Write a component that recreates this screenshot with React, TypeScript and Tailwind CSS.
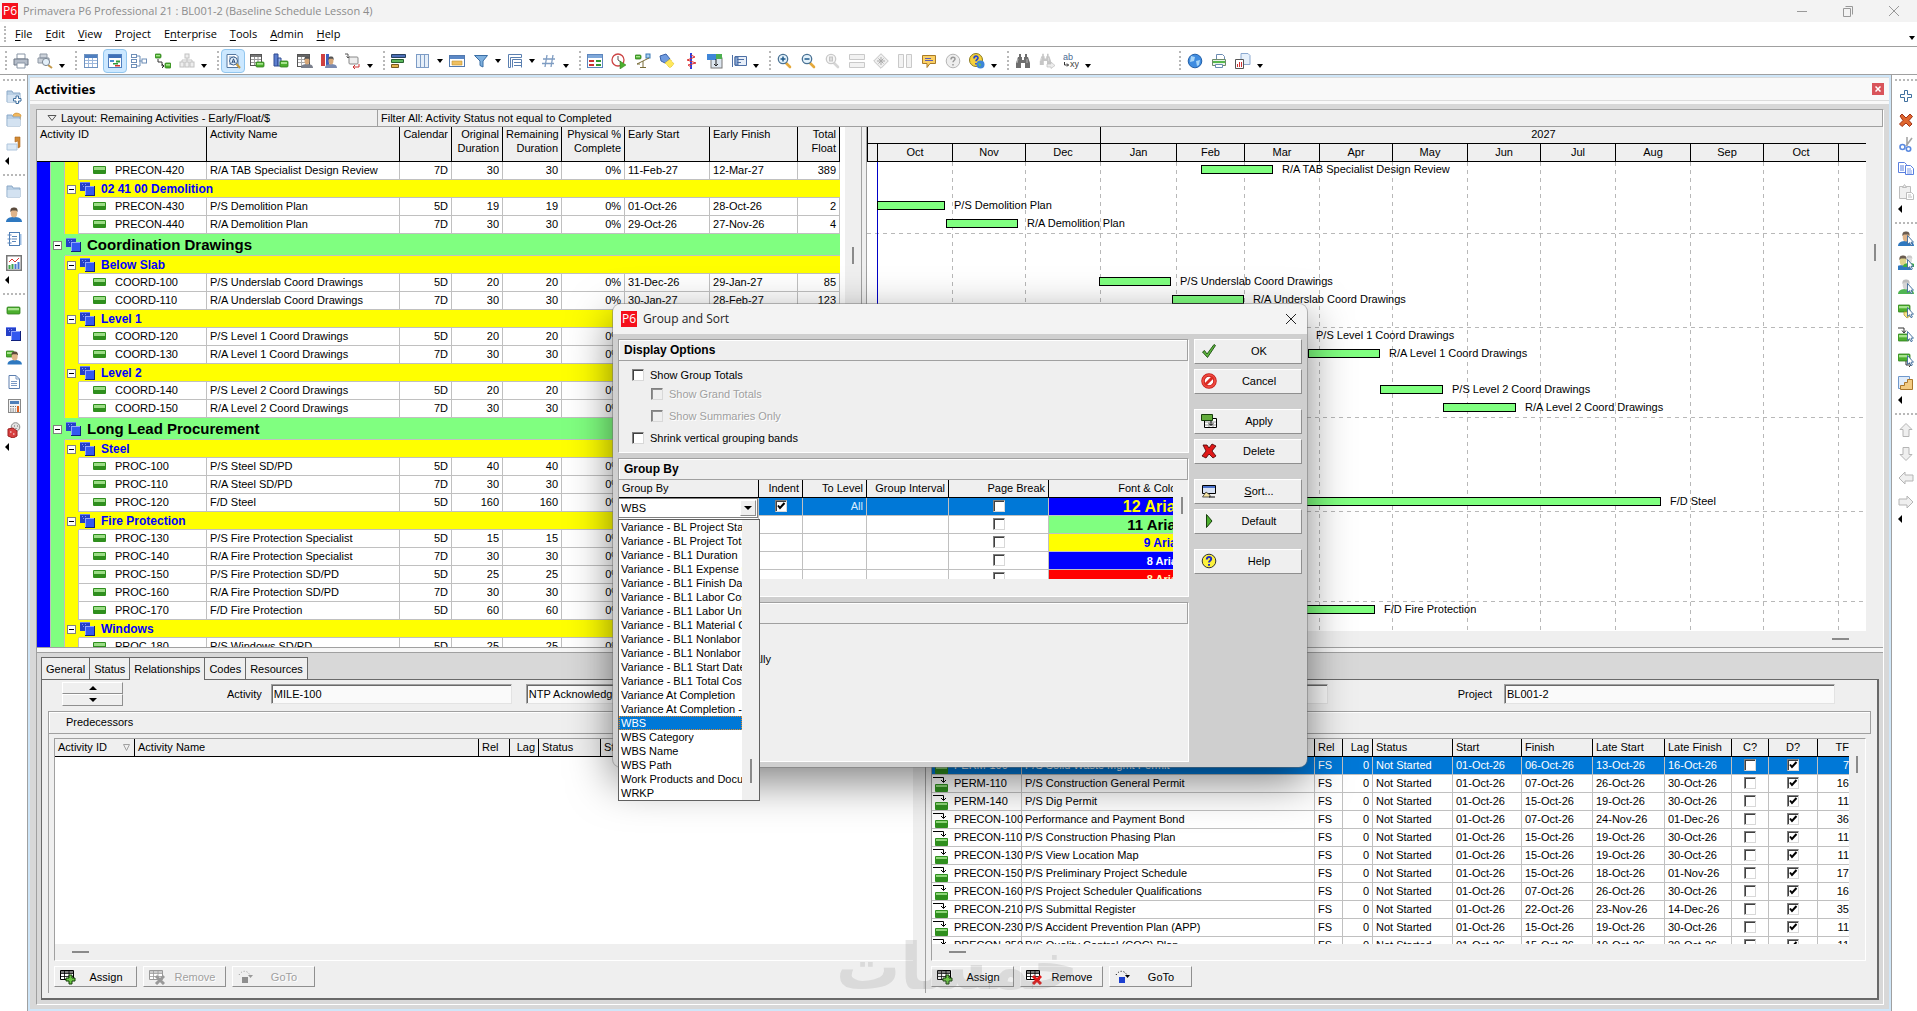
import React from "react";

const ARIAL = "font-['Liberation_Sans',Arial,sans-serif]";
const SEGOE = "font-['Open_Sans','Noto_Sans',sans-serif]";

type Kids = { children?: React.ReactNode };

/* ---------- icons ---------- */

function Svg({ children, w = 16, h = 16 }: Kids & { w?: number; h?: number }) {
  return (
    <svg width={w} height={h} viewBox={`0 0 ${w} ${h}`} aria-hidden="true" className="shrink-0">
      {children}
    </svg>
  );
}

const folder = (
  <>
    <path d="M1 3h5l1 2h7v9H1z" fill="#b9cfe4" stroke="#8ba9c8" />
    <path d="M1.5 7h12.5v7H1.5z" fill="#d3e2f1" />
  </>
);
const cursor = <path d="M9.5 4.5v9l2-1.8 1.5 3 1.4-.7-1.4-2.8h2.5z" fill="#fff" stroke="#3d6a9a" strokeWidth=".9" />;
const green = (x: number, y: number, w: number, h: number) => (
  <>
    <rect x={x} y={y} width={w} height={h} rx="1" fill="#4caf2e" stroke="#2f7d1c" strokeWidth=".8" />
    <rect x={x + 1} y={y + 1} width={w - 2} height={h / 3} fill="#a6e38d" />
  </>
);
const person = (hair: string, skin: string, body: string) => (
  <>
    <path d="M0 15c0-4 4-5 8-5s8 1 8 5z" fill={body} />
    <ellipse cx="8" cy="6" rx="3.3" ry="4.5" fill={skin} />
    <path d="M4.3 5C4.3 1 6 .5 8 .5s3.7.5 3.7 4.5l-1.5-1.5H6z" fill={hair} />
  </>
);
const grid = (
  <>
    <rect x="1.5" y="1.5" width="13" height="13" fill="#fff" stroke="#6f93c0" />
    <rect x="2" y="2" width="12" height="3" fill="#4f7fc0" />
    <path d="M2 7.5h12M2 10.5h12M5.5 5v9M9.5 5v9" stroke="#9db8dc" />
  </>
);
const wbs = (
  <>
    <rect x="0" y="1" width="10" height="9" fill="#2540c8" />
    <path d="M0 1h10v1H0z" fill="#6f86f0" />
    <path d="M2 3.500h1M5 3.500h1M3 5.500h1" stroke="#7f93f5" />
    <rect x="5" y="5" width="10" height="10" fill="#10207c" />
    <rect x="5" y="5" width="9" height="9" fill="#3358f0" />
    <path d="M5 5h9v1H6v8H5z" fill="#93a6fa" />
  </>
);
const lens = (x: number, c: string, g: string, h: string) => (
  <>
    <path d={`M${x + 3} 10l4 4`} stroke={h} strokeWidth="2.6" strokeLinecap="round" />
    <circle cx={x} cy="6" r="4.7" fill={g} stroke={c} strokeWidth="1.3" />
  </>
);
const binoc = (c: string) => (
  <>
    <path d="M4 1h2v4H4zM10 1h2v4h-2z" fill={c} />
    <path d="M3 4h4v3h2V4h4l2 6v5h-5v-5H6v5H1v-5z" fill={c} />
    <path d="M3 6l-1 4M12 6v4" stroke="#fff" strokeWidth=".8" opacity=".6" />
  </>
);

const icons: Record<string, React.ReactNode> = {
  print: (
    <>
      <path d="M4 1h8v5H4z" fill="#fff" stroke="#8895a5" />
      <path d="M1 6h14v6H1z" fill="#b4bcc8" stroke="#6c7785" />
      <path d="M4 10h8v5H4z" fill="#fff" stroke="#8895a5" />
    </>
  ),
  preview: (
    <>
      <path d="M3 1h7v4H3zM1 5h11v5H1z" fill="#ccd2da" stroke="#8d97a4" />
      <path d="M11 12l4 3" stroke="#c49a4c" strokeWidth="2" />
      <circle cx="9" cy="9" r="3.6" fill="#e4f0fa" stroke="#7d8894" />
    </>
  ),
  table: grid,
  gantt: (
    <>
      <rect x="1.5" y="1.5" width="13" height="13" fill="#fff" stroke="#4f7fc0" />
      <rect x="2" y="2" width="12" height="3" fill="#3f70b8" />
      <path d="M3 7h4v2H3z" fill="#4a90d0" />
      <path d="M6 10h5v1.500H6z" fill="#2f9a3a" />
      <path d="M9 7.500h4v2H9z" fill="#2f9a3a" />
      <path d="M8 12h5v1.500H8z" fill="#d03030" />
    </>
  ),
  network: (
    <g fill="#fff" stroke="#6f8fb8">
      <path d="M6 3h3v10H6M8 8h3" fill="none" />
      <rect x=".5" y="1.500" width="5" height="3" />
      <rect x=".5" y="6.500" width="5" height="3" />
      <rect x=".5" y="11.500" width="5" height="3" />
      <rect x="11" y="6" width="4.500" height="4" />
    </g>
  ),
  trace: (
    <>
      {green(0, 1, 6, 4)}
      {green(10, 10, 6, 5)}
      <path d="M3 6v3h4v4h2M7 11l2 2-2 2" fill="none" stroke="#333" />
    </>
  ),
  org: (
    <g fill="#eee" stroke="#c2c2c2">
      <path d="M8 5v4M3 9V7h10v2" fill="none" />
      <rect x="6" y="1" width="4" height="4" />
      <rect x="1" y="9" width="4" height="5" />
      <rect x="6" y="9" width="4" height="5" />
      <rect x="11" y="9" width="4" height="5" />
    </g>
  ),
  find: (
    <>
      <path d="M2 1.500h9l2 2v11H2z" fill="#fff" stroke="#55779f" />
      <path d="M4 4h6M4 6h3M4 11h3" stroke="#6c8cb5" />
      <circle cx="8.500" cy="8" r="4" fill="#e6f2fc" stroke="#3a5f8c" />
      <path d="M6.800 10.300l1.700-4.500 1.700 4.500M7.300 9h2.400" fill="none" stroke="#2a4d7c" />
      <path d="M11.500 11l3.500 4" stroke="#c59a3f" strokeWidth="2" />
    </>
  ),
  tableGreen: (
    <>
      <rect x="1.500" y="1.500" width="11" height="11" fill="#fff" stroke="#555" />
      <path d="M2 2h10v2H2z" fill="#777" />
      <path d="M2 6.500h10M2 9.500h10M5.500 4v8M9 4v8" stroke="#999" />
      {green(7, 9, 8, 5)}
    </>
  ),
  bars: (
    <>
      <path d="M1 1h4v12H1z" fill="#5d7fd0" stroke="#2e4a90" />
      <path d="M5 5h3v8H5z" fill="#9db6ec" stroke="#2e4a90" />
      {green(7, 8, 8, 6)}
    </>
  ),
  resTable: (
    <>
      <rect x="0.500" y="1.500" width="12" height="12" fill="#fff" stroke="#555" />
      <path d="M1 2h11v2H1z" fill="#666" />
      <path d="M1 6.500h11M1 9.500h11M4.500 4v9" stroke="#aaa" />
      <g transform="translate(4 3) scale(.75 .8)">{person("#555", "#d8a878", "#7a7f8c")}</g>
    </>
  ),
  resBars: (
    <>
      <path d="M0 1h4v12H0z" fill="#d04040" />
      <path d="M5 1h3v12H5z" fill="#4060c0" />
      <g transform="translate(4 3) scale(.75 .8)">{person("#555", "#d8a878", "#7a8ab0")}</g>
    </>
  ),
  link: (
    <>
      <rect x="4" y="4" width="9" height="7" rx="1" fill="#eee" stroke="#888" />
      <path d="M0 1h3v4M1.500 3.500L3 5l1.500-1.500" fill="none" stroke="#555" />
      <path d="M8 14h6v-3M10 12l-2 2 2 2" fill="none" stroke="#c33" />
    </>
  ),
  barChart: (
    <>
      <path d="M.5 1.500h14v3H.500z" fill="#4d6fb8" stroke="#27405f" />
      <path d="M.5 6.500h12v3h-12z" fill="#5cb85c" stroke="#27602f" />
      <path d="M.5 11.500h7v3h-7z" fill="#e2b34c" stroke="#785a1f" />
    </>
  ),
  columns: (
    <g fill="#e6eff9" stroke="#7d9cc6">
      <rect x="1.500" y="1.500" width="4" height="13" />
      <rect x="5.500" y="1.500" width="4" height="13" />
      <rect x="9.500" y="1.500" width="4" height="13" />
    </g>
  ),
  timescale: (
    <>
      <rect x=".5" y="2.500" width="15" height="11" fill="#fff" stroke="#5279ae" />
      <path d="M1 3h14v3H1z" fill="#5b88c6" />
      <path d="M3 8h10v4H3z" fill="#f0c060" stroke="#c09030" strokeWidth=".6" />
    </>
  ),
  funnel: <path d="M1.500 2.500h13L10 8v6l-3-1.500V8z" fill="#7fb0de" stroke="#3a6ea5" />,
  group: (
    <g fill="none" stroke="#5a7fb0">
      <path d="M1.500 14.500v-13h13v3h-11v10zM5.500 14.500v-8h9v8M7 9.500h7M7 12.500h7" />
    </g>
  ),
  hash: <path d="M6 2L4 14M12 2l-2 12M2 6h12M1 10.500h12" stroke="#7e9cc2" strokeWidth="1.300" />,
  codes: (
    <>
      <rect x=".5" y="1.500" width="15" height="13" fill="#fff" stroke="#5d86bd" />
      <path d="M1 2h14v3H1z" fill="#7fa8da" />
      <path d="M2 7h5v2H2zM2 11h5v2H2z" fill="#c33" />
      <path d="M9 7h5v2H9zM9 11h5v2H9z" fill="#393" />
    </>
  ),
  clock: (
    <>
      <circle cx="7" cy="7" r="6" fill="#fff" stroke="#c44" strokeWidth="1.300" />
      <path d="M7 3v4l3 2" fill="none" stroke="#555" />
      <path d="M9 8l6 4-6 4z" fill="#4caf2e" stroke="#2f7d1c" strokeWidth=".5" />
    </>
  ),
  level: (
    <>
      {green(0, 2, 6, 4)}
      <rect x="11" y="1" width="4" height="4" fill="#a8d0f0" stroke="#3a79b5" />
      <path d="M2 11l12-6M8 8v6M5 14.500h6M2 11h3" stroke="#786c38" fill="none" />
    </>
  ),
  spot: (
    <>
      <path d="M1 3l6-2 4 5-5 4-4-2z" fill="#6f9be0" stroke="#3b62a8" />
      <path d="M6 10l5-4 4 5-4 4z" fill="#ffe85c" stroke="#dcc02f" strokeDasharray="1 1" />
    </>
  ),
  progress: (
    <>
      <path d="M8 0v16" stroke="#2940e0" strokeWidth="2" />
      <path d="M8 2l4 2-8 3 9 3-8 2 3 2" fill="none" stroke="#d33" />
    </>
  ),
  layoutSave: (
    <>
      <rect x="4" y="5" width="11" height="10" fill="#dde6f0" stroke="#777" />
      <rect x="0" y="1" width="9" height="6" fill="#3f86d8" />
      <rect x="9" y="1" width="6" height="5" fill="#4caf50" />
      <path d="M9 6v7M7 11l2 2 2-2" fill="none" stroke="#222" />
    </>
  ),
  notes: (
    <>
      <path d="M1.500 2v12M4 3.500h11.500v9H4z" fill="#e7eef8" stroke="#4d6fa5" />
      <path d="M6 6.500h7M6 9.500h4M4 4h3v8H4z" stroke="#4d6fa5" fill="#88a6d3" />
    </>
  ),
  zoomIn: (
    <>
      {lens(6, "#4a7294", "#e4f2fb", "#e5a93c")}
      <path d="M3.500 6h5M6 3.500v5" stroke="#1e5a8c" strokeWidth="1.500" />
    </>
  ),
  zoomOut: (
    <>
      {lens(6, "#4a7294", "#e4f2fb", "#e5a93c")}
      <path d="M3.500 6h5" stroke="#1e5a8c" strokeWidth="1.500" />
    </>
  ),
  zoomGray: (
    <>
      {lens(6, "#c9c9c9", "#f6f6f6", "#d6d6d6")}
      <rect x="4.500" y="4" width="3" height="4" fill="#ddd" stroke="#c4c4c4" />
    </>
  ),
  splitH: <path d="M.5 1.500h15v5H.500zM.5 9.500h15v5H.500z" fill="#f2f2f2" stroke="#c9c9c9" />,
  diamond: (
    <>
      <path d="M8 .7L15.300 8 8 15.300.7 8z" fill="#eee" stroke="#c4c4c4" />
      <path d="M8 4v8M4 8h8M5.500 5.500l5 5M10.500 5.500l-5 5" stroke="#aaa" />
    </>
  ),
  splitV: <path d="M1.500 1.500h5v13h-5zM9.500 1.500h5v13h-5z" fill="#f2f2f2" stroke="#c9c9c9" />,
  comment: (
    <>
      <path d="M1.500 2.500h13v8H9l-3 4v-4H1.500z" fill="#fbd065" stroke="#a97b28" />
      <path d="M4 5.500h6M4 7.500h8" stroke="#5a5fb5" />
    </>
  ),
  helpGray: (
    <>
      <circle cx="8" cy="8" r="6.800" fill="#eee" stroke="#b5b5b5" />
      <path d="M6 6.500c0-3 4-3 4-.5 0 1.500-2 1.500-2 3.300M8 11v1.500" fill="none" stroke="#999" strokeWidth="1.500" />
    </>
  ),
  helpGlobe: (
    <>
      <circle cx="7" cy="7" r="6.500" fill="#f6d13c" stroke="#8a7a20" />
      <path d="M5 5.500c0-3 4-3 4-.5 0 1.500-2 1.500-2 3.300M7 10v1.500" fill="none" stroke="#2746d0" strokeWidth="1.700" />
      <circle cx="11.500" cy="11.500" r="4" fill="#3d86d8" />
      <path d="M9 10l3 1-1 3z" fill="#5fc05f" />
    </>
  ),
  binoc: binoc("#6e6e6e"),
  binocNext: (
    <>
      <g transform="scale(.8)">{binoc("#c6c6c6")}</g>
      <path d="M8 11h4V9l4 3.500-4 3V14H8z" fill="#ececec" stroke="#bdbdbd" strokeWidth=".7" />
    </>
  ),
  replace: (
    <>
      <text x="0" y="7" fontSize="9" fill="#4a6a92" fontFamily="Liberation Sans">ab</text>
      <path d="M1.500 9v3h4M4 10.500l1.500 1.500L4 13.500" fill="none" stroke="#333" />
      <text x="7" y="14" fontSize="9" fill="#444" fontFamily="Liberation Sans">xy</text>
    </>
  ),
  globe: (
    <>
      <circle cx="8" cy="8" r="6.800" fill="#3f8ce0" stroke="#2360a8" />
      <path d="M4 3l4 1-1 4-4 1zM9 8l4-1-1 5-2 1z" fill="#a9d6f7" />
    </>
  ),
  printGreen: (
    <>
      <path d="M5.500 1.500h6l2 2v4h-8z" fill="#fff" stroke="#6b8bb2" />
      <path d="M1.500 6.500h13v6h-13z" fill="#e9f3e8" stroke="#6d8a6a" />
      <path d="M2 8h12v2H2z" fill="#57b84e" />
      <path d="M4.500 11.500h7v3h-7z" fill="#fff" stroke="#6b8bb2" />
    </>
  ),
  report: (
    <>
      <path d="M6 .5h7l2 2v9H6z" fill="#e6f0fb" stroke="#8ba9d0" />
      <path d="M.5 6.500h8v9h-8z" fill="#fff" stroke="#555" />
      <path d="M2.500 14v-3M4.500 14V9M6.500 14v-5" stroke="#c33" />
    </>
  ),
  folderAdd: (
    <>
      {folder}
      <path d="M10 8h2.500v2.500H15V13h-2.500v2.500H10V13H7.500v-2.500H10z" fill="#fff" stroke="#3f6f9e" />
    </>
  ),
  folderOpen: (
    <>
      <path d="M7 3c2-3 6-2 8 0l-1 5H6z" fill="#f0b75e" stroke="#c58629" strokeWidth=".6" />
      {folder}
    </>
  ),
  folderClose: (
    <>
      <path d="M9 1h5v10l-2 1V5l-3 1z" fill="#d28a34" stroke="#a86520" strokeWidth=".6" />
      <path d="M1 8h10v6H1z" fill="#dce9f5" stroke="#afc6dd" />
    </>
  ),
  folder,
  person: person("#5a4a3c", "#dfb48a", "#2e78c0"),
  book: (
    <>
      <rect x="3.500" y="1.500" width="10" height="13" fill="#fff" stroke="#4d7db5" />
      <path d="M14 3h1.500v11H14z" fill="#9dbde2" />
      <path d="M6 5.500h5M6 8h5M6 10.500h4M1.500 4h4M1.500 8h4M1.500 12h4" stroke="#5d87bb" />
    </>
  ),
  chart: (
    <>
      <rect x=".75" y=".75" width="14.500" height="14.500" fill="#fff" stroke="#777" strokeWidth="1.500" />
      <path d="M3.500 14v-4M6.500 14V9" stroke="#3fa34d" strokeWidth="2" />
      <path d="M9.500 14v-5M12.500 14v-7" stroke="#4a78d0" strokeWidth="2" />
      <path d="M3 7l3-3 3 3 4-4" fill="none" stroke="#d33" />
    </>
  ),
  activity: green(1, 5, 13, 7),
  wbs,
  resource: (
    <>
      {green(0, 1, 8, 6)}
      <g transform="translate(1.500 1) scale(.9)">{person("#5a4a3c", "#dfb48a", "#2e78c0")}</g>
    </>
  ),
  doc: (
    <>
      <path d="M3 1.500h7l3.500 3.500v9.500H3z" fill="#fff" stroke="#5e7fae" />
      <path d="M10 1.500V5h3.500M5 7.500h6M5 9.500h6M5 11.500h6" fill="none" stroke="#7c9ac4" />
    </>
  ),
  calc: (
    <>
      <rect x="2.500" y="1.500" width="12" height="13" fill="#f2f2f2" stroke="#888" />
      <path d="M4 3h9v3H4z" fill="#4f7fb8" />
      <path d="M4 8.500h6M4 11h6M4 13h6" stroke="#777" strokeDasharray="1.500 1" />
      <path d="M12 8v6" stroke="#e06020" strokeWidth="2" />
    </>
  ),
  risk: (
    <>
      <circle cx="9.500" cy="5" r="4.300" fill="#e2e2e2" stroke="#8b8b8b" />
      <path d="M8 4h1M11 4h1M9.500 6.500h1" stroke="#666" />
      <path d="M2 7l5-1 4 3v5l-4 2-5-2z" fill="#d84040" stroke="#9d2020" />
      <path d="M4 10h1.500M7 12h1.500" stroke="#fff" />
    </>
  ),
  plus: <path d="M6.500 2.500h3v4h4v3h-4v4h-3v-4h-4v-3h4z" fill="#fff" stroke="#3f6f9e" />,
  cross: (
    <path
      d="M4 2l4 4 4-4 2.500 2.500L11 8.500l3 3.500-2.500 2.500L8 11l-4 3.500L1.500 12 5 8.500 2 4z"
      fill="#e0672e"
      stroke="#a03318"
    />
  ),
  cut: (
    <>
      <path d="M9 1v9M14 2L8 10" stroke="#a5a5a5" strokeWidth="1.600" />
      <circle cx="4.500" cy="11" r="2.500" fill="#fff" stroke="#5b8ae0" strokeWidth="1.600" />
      <circle cx="10.500" cy="13" r="2.200" fill="#fff" stroke="#5b8ae0" strokeWidth="1.600" />
    </>
  ),
  copy: (
    <g fill="#fff" stroke="#5b80e0">
      <path d="M.5 2.500h6l2 2v8h-8z" />
      <path d="M2 6h4M2 8h4M2 10h4" />
      <path d="M7.500 5.500h5l3 3v6h-8z" />
      <path d="M9 9h4M9 11h5M9 13h5" stroke="#7f9dea" />
    </g>
  ),
  paste: (
    <g fill="#f0f0f0" stroke="#bdbdbd">
      <path d="M1.500 2.500h11v12h-11z" />
      <path d="M4.500 3.500l2-3 2 3z" />
      <path d="M8.500 8.500h5l2 2v5h-7z" fill="#fff" />
      <path d="M10 11h3M10 13h4" />
    </g>
  ),
  personPick: (
    <>
      {person("#6a5c50", "#dfb48a", "#2e78c0")}
      {cursor}
    </>
  ),
  peoplePick: (
    <>
      <g transform="translate(-3 0)">{person("#6a5c50", "#dfd48a", "#2e78c0")}</g>
      <g transform="translate(5 0) scale(.8)">{person("#c9c9c9", "#dedede", "#3fae3f")}</g>
      {cursor}
    </>
  ),
  rolePick: (
    <>
      {person("#bdbdbd", "#d4d4d4", "#4fb552")}
      {cursor}
    </>
  ),
  codePick: (
    <>
      {green(0, 2, 12, 7)}
      <path d="M6 9h6v4l-3 2-3-3z" fill="#f6e58c" stroke="#b59b34" strokeWidth=".8" />
      {cursor}
    </>
  ),
  predPick: (
    <>
      <path d="M0 1h6v4M4 3.500L6 6l2-2.500" fill="none" stroke="#333" />
      {green(0, 7, 11, 7)}
      {cursor}
    </>
  ),
  succPick: (
    <>
      {green(0, 3, 12, 7)}
      <path d="M8 10v4h5M11 12l2 2-2 2" fill="none" stroke="#333" />
      {cursor}
    </>
  ),
  steps: (
    <>
      <path d="M.5 1.500h11v12H.500z" fill="#e0ecfa" stroke="#6f98cc" />
      <path d="M2.500 14.500v-4h4v-3h3v-3h5v10z" fill="#f3cb82" stroke="#a9772c" />
    </>
  ),
  up: <path d="M8 1.500l6 6h-3v7H5v-7H2z" fill="#efefef" stroke="#b5b5b5" />,
  down: <path d="M8 14.500l6-6h-3v-7H5v7H2z" fill="#efefef" stroke="#b5b5b5" />,
  left: <path d="M1 8l6-6v3h8v6H7v3z" fill="#efefef" stroke="#b5b5b5" />,
  right: <path d="M15 8L9 2v3H1v6h8v3z" fill="#efefef" stroke="#b5b5b5" />,
  ok: <path d="M1.500 9l2-1.500L6 11l7-9.500 1.500 1L6.500 14.500z" fill="#5cb53c" stroke="#1c4d10" strokeWidth=".9" />,
  cancel: (
    <>
      <circle cx="8" cy="8" r="6" fill="#fff" stroke="#c01818" strokeWidth="3.500" />
      <circle cx="8" cy="8" r="6" fill="none" stroke="#ef4a3f" strokeWidth="2" />
      <path d="M12 4l-8 8" stroke="#d92a22" strokeWidth="3" />
    </>
  ),
  apply: (
    <>
      <path d="M3.500 5.500h12v9h-12z" fill="#fff" stroke="#000" />
      <path d="M4 9h11M4 12h11M8 9v5M12 9v5" stroke="#999" />
      <path d="M.5 1.500h11v6H.500z" fill="#62ab3c" stroke="#173f0c" />
      <path d="M10 8v4M8 10.500l2 2 2-2" fill="none" stroke="#000" />
    </>
  ),
  delete: (
    <path d="M2 2h4l2 3 3-4 4 2-4 5 4 5-3 2-4-4-3 4-4-2 4-5z" fill="#e01818" stroke="#400" strokeWidth=".8" />
  ),
  sort: (
    <>
      <path d="M1.500 2.500h13v8h-13z" fill="#d8e2f4" stroke="#000" />
      <path d="M2 3h12v2H2z" fill="#4a70c8" />
      <path d="M5 9l4 3v2H1.500z" fill="#f4e2a0" stroke="#333" strokeWidth=".8" />
      <path d="M8 14h6" stroke="#000" />
    </>
  ),
  play: <path d="M5.500 1.500L11 8l-5.500 6.500z" fill="#4caf2e" stroke="#173f0c" />,
  help: (
    <>
      <circle cx="8" cy="8" r="6.800" fill="#fbf03c" stroke="#333" />
      <path d="M5.800 6.500c0-3.500 4.600-3 4.400-.4 0 1.600-2.200 1.700-2.200 3.300M8 11v1.800" fill="none" stroke="#1c28c8" strokeWidth="2" />
    </>
  ),
};

function tableIcon(line: string, badge: React.ReactNode) {
  return (
    <>
      <path d="M.5 1.500h13v9H.500z" fill="#fff" stroke={line} />
      <path d="M1 2h12v2H1z" fill={line} opacity=".5" />
      <path d="M1 4.500h12M1 7.500h12M4.500 2v8M9 2v8" stroke={line} strokeWidth=".8" />
      {badge}
    </>
  );
}
const plusBadge = (
  <path d="M9 6h3v3h3v3h-3v3H9v-3H6V9h3z" fill="#6cc644" stroke="#123d08" />
);
const xBadge = (c: string) => <path d="M7 7l8 8M15 7l-8 8" stroke={c} strokeWidth="3" />;
icons.assign = tableIcon("#000", plusBadge);
icons.remove = tableIcon("#000", xBadge("#e01818"));
icons.removeGray = tableIcon("#999", xBadge("#999"));
const goTo = (c: string, k: string) => (
  <>
    <path d="M1 6c3-5 8-5 11 0" fill="none" stroke={k} strokeDasharray="1 2" />
    <path d="M10 6h5l-2.500 3z" fill={k} />
    <rect x="4" y="8" width="6" height="6" fill={c} />
  </>
);
icons.goto = goTo("#1c3fd0", "#000");
icons.gotoGray = goTo("#8e8e8e", "#999");

function Icon({ n }: { n: string }) {
  return <Svg>{icons[n]}</Svg>;
}

function Caret({ left = false }: { left?: boolean }) {
  return left ? (
    <svg width="4" height="8" viewBox="0 0 4 8" aria-hidden="true"><path d="M4 0v8L0 4z" /></svg>
  ) : (
    <svg width="6" height="4" viewBox="0 0 6 4" aria-hidden="true"><path d="M0 0h6L3 4z" /></svg>
  );
}

/* ---------- chrome ---------- */

function Logo() {
  return (
    <span className="flex size-4 shrink-0 items-center justify-center bg-[#f5101c] text-xs leading-none text-white">
      P6
    </span>
  );
}

function TitleBar() {
  return (
    <header className={`flex h-[22px] shrink-0 items-center bg-[#f3f3f3] pl-0.5 text-[#8c8c8c] ${SEGOE}`}>
      <Logo />
      <h1 className="ml-[5px] flex-1 text-[11px]">Primavera P6 Professional 21 : BL001-2 (Baseline Schedule Lesson 4)</h1>
      <div className="flex">
        <button aria-label="Minimize" className="flex w-[46px] justify-center">
          <Svg w={12} h={12}><path d="M1 6.500h10" stroke="#999" /></Svg>
        </button>
        <button aria-label="Restore" className="flex w-[46px] justify-center">
          <Svg w={12} h={12}>
            <path d="M1.500 3.500h7v8h-7zM3.500 1.500h7v8" fill="none" stroke="#999" />
          </Svg>
        </button>
        <button aria-label="Close" className="flex w-[46px] justify-center">
          <Svg w={12} h={12}><path d="M1 1l10 10M11 1L1 11" stroke="#999" /></Svg>
        </button>
      </div>
    </header>
  );
}

const menus: [string, string, string][] = [
  ["", "F", "ile"], ["", "E", "dit"], ["", "V", "iew"], ["", "P", "roject"],
  ["E", "n", "terprise"], ["", "T", "ools"], ["", "A", "dmin"], ["", "H", "elp"],
];

function Grip() {
  return <span className="my-1 w-1 shrink-0 self-stretch border-l-2 border-dotted border-[#b8b8b8]" />;
}

function MenuBar() {
  return (
    <nav className={`flex h-[25px] shrink-0 items-center border-b border-[#a0a0a0] pl-1 text-[11px] ${SEGOE}`}>
      <Grip />
      <div className="flex flex-1 gap-px pl-px">
        {menus.map(([a, b, c]) => (
          <button key={b + c} className="px-1.5">
            {a}<u className="underline-offset-2">{b}</u>{c}
          </button>
        ))}
      </div>
      <span className="self-end pb-1.5 pr-0.5"><Caret /></span>
    </nav>
  );
}

const toolGroups: string[][] = [
  ["print", "preview"],
  ["table", "gantt*", "network", "trace", "org"],
  ["find*", "tableGreen", "bars", "resTable", "resBars", "link"],
  ["barChart", "columns>", "timescale", "funnel>", "group>", "hash"],
  ["codes", "clock", "level", "spot", "progress", "layoutSave", "notes"],
  ["zoomIn", "zoomOut", "zoomGray", "splitH", "diamond", "splitV", "comment", "helpGray", "helpGlobe"],
  ["binoc", "binocNext", "replace"],
  ["globe", "printGreen", "report"],
];

function ToolBar() {
  return (
    <div role="toolbar" className="flex h-7 shrink-0 items-center gap-2 border-b border-[#a0a0a0] pl-[5px]">
      {toolGroups.map((g, i) => (
        <div key={i} className={i === 7 ? "ml-[78px] flex h-full items-center" : "flex h-full items-center"}>
          <Grip />
          {g.map((raw) => {
            const n = raw.replace(/[*>]/, "");
            const on = raw.endsWith("*");
            return (
              <React.Fragment key={n}>
                <button
                  aria-label={n}
                  className={
                    on
                      ? "flex size-6 items-center justify-center rounded-sm border border-[#92c6ee] bg-[#cce8ff]"
                      : "flex size-6 items-center justify-center"
                  }
                >
                  <Icon n={n} />
                </button>
                {raw.endsWith(">") && (
                  <span className="flex w-2.5 justify-center"><Caret /></span>
                )}
              </React.Fragment>
            );
          })}
          <span className="flex w-2.5 justify-center self-end pb-1.5"><Caret /></span>
        </div>
      ))}
    </div>
  );
}

function SideBar({ groups }: { groups: string[][] }) {
  return (
    <aside className="flex flex-col gap-2 pt-1">
      {groups.map((g, i) => (
        <div key={i} className="flex flex-col items-center">
          <span className="mb-[3px] w-[22px] border-t-2 border-dotted border-[#b8b8b8]" />
          {g.map((n) => (
            <button key={n} aria-label={n} className="flex size-6 items-center justify-center">
              <Icon n={n} />
            </button>
          ))}
          <span className="flex h-2.5 items-center self-start pl-1"><Caret left /></span>
        </div>
      ))}
    </aside>
  );
}

const leftGroups = [
  ["folderAdd", "folderOpen", "folderClose"],
  ["folder", "person", "book", "chart"],
  ["activity", "wbs", "resource", "doc", "calc", "risk"],
];
const rightGroups = [
  ["plus", "cross", "cut", "copy", "paste"],
  ["personPick", "peoplePick", "rolePick", "codePick", "predPick", "succPick", "steps"],
  ["up", "down", "left", "right"],
];

/* ---------- activity table ---------- */

type Row =
  | { k: "g" | "y"; name: string }
  | { k: "a"; id: string; name: string; cal: string; dur: string; s: string; f: string; tf: string; bar?: [number, number] };

const act = (
  id: string, name: string, cal: string, dur: string, s: string, f: string, tf: string, bar?: [number, number],
): Row => ({ k: "a", id, name, cal, dur, s, f, tf, bar });

const rows: Row[] = [
  act("PRECON-420", "R/A TAB Specialist Design Review", "7D", "30", "11-Feb-27", "12-Mar-27", "389", [334, 72]),
  { k: "y", name: "02 41 00 Demolition" },
  act("PRECON-430", "P/S Demolition Plan", "5D", "19", "01-Oct-26", "28-Oct-26", "2", [10, 68]),
  act("PRECON-440", "R/A Demolition Plan", "7D", "30", "29-Oct-26", "27-Nov-26", "4", [79, 72]),
  { k: "g", name: "Coordination Drawings" },
  { k: "y", name: "Below Slab" },
  act("COORD-100", "P/S Underslab Coord Drawings", "5D", "20", "31-Dec-26", "29-Jan-27", "85", [232, 72]),
  act("COORD-110", "R/A Underslab Coord Drawings", "7D", "30", "30-Jan-27", "28-Feb-27", "123", [305, 72]),
  { k: "y", name: "Level 1" },
  act("COORD-120", "P/S Level 1 Coord Drawings", "5D", "20", "", "", "", [378, 62]),
  act("COORD-130", "R/A Level 1 Coord Drawings", "7D", "30", "", "", "", [441, 72]),
  { k: "y", name: "Level 2" },
  act("COORD-140", "P/S Level 2 Coord Drawings", "5D", "20", "", "", "", [513, 63]),
  act("COORD-150", "R/A Level 2 Coord Drawings", "7D", "30", "", "", "", [576, 73]),
  { k: "g", name: "Long Lead Procurement" },
  { k: "y", name: "Steel" },
  act("PROC-100", "P/S Steel SD/PD", "5D", "40", "", "", ""),
  act("PROC-110", "R/A Steel SD/PD", "7D", "30", "", "", ""),
  act("PROC-120", "F/D Steel", "5D", "160", "", "", "", [400, 394]),
  { k: "y", name: "Fire Protection" },
  act("PROC-130", "P/S Fire Protection Specialist", "5D", "15", "", "", ""),
  act("PROC-140", "R/A Fire Protection Specialist", "7D", "30", "", "", ""),
  act("PROC-150", "P/S Fire Protection SD/PD", "5D", "25", "", "", ""),
  act("PROC-160", "R/A Fire Protection SD/PD", "7D", "30", "", "", ""),
  act("PROC-170", "F/D Fire Protection", "5D", "60", "", "", "", [300, 208]),
  { k: "y", name: "Windows" },
  act("PROC-180", "P/S Windows SD/PD", "5D", "25", "", "", ""),
];

function Minus() {
  return (
    <svg width="9" height="9" viewBox="0 0 9 9" aria-hidden="true" className="ml-0.5">
      <rect x=".5" y=".5" width="8" height="8" fill="#fff" stroke="#808080" />
      <path d="M2 4.500h5" stroke="#000" />
    </svg>
  );
}

function GreenBlock() {
  return (
    <svg width="13" height="8" viewBox="0 0 13 8" aria-hidden="true">
      <rect x="0" y="0" width="13" height="8" rx="1" fill="#2f8f1e" />
      <rect x="1" y="1" width="11" height="3" fill="#9bdc86" />
    </svg>
  );
}

const headCls = "border-b border-r border-black bg-[#efefef] px-[3px] align-top font-normal";
const cellCls = "overflow-hidden whitespace-nowrap border-b border-r border-[#c0c0c0] px-[3px] pb-0.5";

function ActivityTable() {
  const heads: [string, string][] = [
    ["Activity Name", "text-left"], ["Calendar", "text-right"], ["Original Duration", "text-right"],
    ["Remaining Duration", "text-right"], ["Physical % Complete", "text-right"], ["Early Start", "text-left"],
    ["Early Finish", "text-left"], ["Total Float", "text-right"],
  ];
  return (
    <div className="flex w-[824px] shrink-0 overflow-hidden bg-[#efefef]">
      <div className="w-[808px] overflow-hidden bg-white">
        <table className="w-[803px] table-fixed border-separate border-spacing-0 text-[11px] leading-[14px]">
          <colgroup>
            <col className="w-[14px]" /><col className="w-[14px]" /><col className="w-[14px]" />
            <col className="w-[128px]" /><col className="w-[193px]" /><col className="w-[52px]" />
            <col className="w-[51px]" /><col className="w-[59px]" /><col className="w-[63px]" />
            <col className="w-[85px]" /><col className="w-[88px]" /><col className="w-[42px]" />
          </colgroup>
          <thead>
            <tr className="h-[35px]">
              <th colSpan={4} className={`${headCls} text-left`}>Activity ID</th>
              {heads.map(([h, a]) => (
                <th key={h} className={`${headCls} ${a}`}>{h}</th>
              ))}
            </tr>
          </thead>
          <tbody>
            {rows.map((r, i) =>
              r.k === "g" ? (
                <tr key={i} className="h-[22px] bg-[#80ff80]">
                  <td className="border-r border-[#c0c0c0] bg-[#0000ff]" />
                  <td><Minus /></td>
                  <td colSpan={10} className="border-b border-[#c0c0c0]">
                    <div className="flex h-5 items-center gap-[5px] pl-px text-[15px] font-bold">
                      <Icon n="wbs" />{r.name}
                    </div>
                  </td>
                </tr>
              ) : r.k === "y" ? (
                <tr key={i} className="h-[18px] bg-[#ffff00]">
                  <td className="border-r border-[#c0c0c0] bg-[#0000ff]" />
                  <td className="border-r border-[#c0c0c0] bg-[#80ff80]" />
                  <td><Minus /></td>
                  <td colSpan={9} className="border-b border-[#c0c0c0]">
                    <div className="flex h-[17px] items-center gap-[5px] pl-px text-xs font-bold text-[#0000ff]">
                      <Icon n="wbs" />{r.name}
                    </div>
                  </td>
                </tr>
              ) : (
                <tr key={i} className="h-[18px]">
                  <td className="border-r border-[#c0c0c0] bg-[#0000ff]" />
                  <td className="border-r border-[#c0c0c0] bg-[#80ff80]" />
                  <td className="border-r border-[#c0c0c0] bg-[#ffff00]" />
                  <td className={cellCls}>
                    <div className="flex items-center gap-[9px] pl-[11px]"><GreenBlock />{r.id}</div>
                  </td>
                  <td className={cellCls}>{r.name}</td>
                  <td className={`${cellCls} text-right`}>{r.cal}</td>
                  <td className={`${cellCls} text-right`}>{r.dur}</td>
                  <td className={`${cellCls} text-right`}>{r.dur}</td>
                  <td className={`${cellCls} text-right`}>0%</td>
                  <td className={cellCls}>{r.s}</td>
                  <td className={cellCls}>{r.f}</td>
                  <td className={`${cellCls} text-right`}>{r.tf}</td>
                </tr>
              ),
            )}
          </tbody>
        </table>
      </div>
      <div className="flex flex-1 justify-center pt-[120px]">
        <span className="h-[17px] w-0.5 bg-[#8a8a8a]" />
      </div>
    </div>
  );
}

/* ---------- gantt ---------- */

const months: [string, string][] = [
  ["", "w-[10px]"], ["Oct", "w-[75px]"], ["Nov", "w-[73px]"], ["Dec", "w-[75px]"], ["Jan", "w-[76px]"],
  ["Feb", "w-[68px]"], ["Mar", "w-[75px]"], ["Apr", "w-[73px]"], ["May", "w-[75px]"], ["Jun", "w-[73px]"],
  ["Jul", "w-[75px]"], ["Aug", "w-[75px]"], ["Sep", "w-[73px]"], ["Oct", "w-[75px]"], ["", "w-[75px]"],
];
const monthLines = [85, 158, 233, 309, 377, 452, 525, 600, 673, 748, 823, 896, 971];
const rowLines = [71, 165, 255, 349, 439];

function Gantt() {
  return (
    <div className="flex min-w-0 flex-1 bg-[#efefef]">
      <div className="flex min-w-0 flex-1 flex-col">
        <div className="h-[35px] shrink-0 overflow-hidden border-b border-l border-black text-[11px] leading-[14px]">
          <div className="flex h-[17px] w-[1118px] border-b border-black">
            <span className="w-[233px] border-r border-black" />
            <span className="flex-1 text-center">2027</span>
          </div>
          <div className="flex h-[17px] w-[1118px] leading-4">
            {months.map(([m, w], i) => (
              <span key={i} className={`${w} shrink-0 border-r border-black text-center`}>{m}</span>
            ))}
          </div>
        </div>
        <div className="relative flex-1 overflow-hidden bg-white">
          <svg className="absolute inset-0 size-full" aria-hidden="true">
            <g stroke="#b8b8b8" strokeDasharray="4 4">
              {monthLines.map((x) => <line key={x} x1={x + 0.5} x2={x + 0.5} y1="0" y2="100%" />)}
              {rowLines.map((y) => <line key={y} x1="0" x2="100%" y1={y + 0.5} y2={y + 0.5} />)}
            </g>
            <line x1="10.500" x2="10.500" y1="0" y2="100%" stroke="#0000c8" />
          </svg>
          <div className="relative">
            {rows.map((r, i) =>
              r.k === "a" ? (
                <div key={i} className="flex h-[18px] gap-[9px] whitespace-nowrap text-[11px] leading-[14px]">
                  {r.bar && (
                    <>
                      <span
                        className="mt-[3px] h-[9px] shrink-0 border border-black bg-[#80ff80]"
                        style={{ marginLeft: r.bar[0], width: r.bar[1] }}
                      />
                      <span>{r.name}</span>
                    </>
                  )}
                </div>
              ) : (
                <div key={i} className={r.k === "g" ? "h-[22px]" : "h-[18px]"} />
              ),
            )}
          </div>
        </div>
        <div className="flex h-4 shrink-0 items-center justify-end pr-[17px]">
          <span className="h-0.5 w-[17px] bg-[#8a8a8a]" />
        </div>
      </div>
      <div className="flex w-[17px] justify-center pt-[117px]">
        <span className="h-[17px] w-0.5 bg-[#8a8a8a]" />
      </div>
    </div>
  );
}

/* ---------- controls ---------- */

function Check({ checked = false, disabled = false, label }: { checked?: boolean; disabled?: boolean; label?: string }) {
  return (
    <span className="relative inline-flex size-3 shrink-0">
      <input
        type="checkbox"
        defaultChecked={checked}
        disabled={disabled}
        aria-label={label}
        className="peer size-3 appearance-none border border-b-[#d8d8d8] border-l-[#808080] border-r-[#d8d8d8] border-t-[#808080] bg-white shadow-[inset_1px_1px_0_#404040] disabled:bg-[#efefef] disabled:shadow-[inset_1px_1px_0_#909090]"
      />
      <svg viewBox="0 0 12 12" aria-hidden="true" className="pointer-events-none absolute inset-0 hidden size-3 peer-checked:block">
        <path d="M3 5.500l2 2.500 4.500-5" fill="none" stroke="#000" strokeWidth="2" />
      </svg>
    </span>
  );
}

function CheckLabel({ text, disabled = false }: { text: string; disabled?: boolean }) {
  return (
    <label
      className={
        disabled
          ? "flex h-[14px] items-center gap-1.5 text-[#a0a0a0] [text-shadow:1px_1px_0_#fff]"
          : "flex h-[14px] items-center gap-1.5"
      }
    >
      <Check disabled={disabled} />
      {text}
    </label>
  );
}

const raised = "border border-b-[#8f8f8f] border-l-white border-r-[#8f8f8f] border-t-white bg-[#efefef]";

function SmallButton({ icon, text, disabled = false }: { icon: string; text: string; disabled?: boolean }) {
  return (
    <button
      disabled={disabled}
      className={`flex h-[21px] w-[83px] items-center pl-[5px] ${raised} disabled:text-[#a0a0a0] disabled:[text-shadow:1px_1px_0_#fff]`}
    >
      <Icon n={icon} />
      <span className="flex-1 text-center">{text}</span>
    </button>
  );
}

const field =
  "h-5 min-w-0 border border-b-[#e3e3e3] border-l-[#a0a0a0] border-r-[#e3e3e3] border-t-[#a0a0a0] bg-[#fafafa] px-0.5 shadow-[inset_1px_1px_0_#696969]";

/* ---------- detail panes ---------- */

const hdBase = "whitespace-nowrap border-b border-r border-black bg-[#efefef] px-[3px] pb-px font-normal";
const hd = `${hdBase} text-left`;
const hdRight = `${hdBase} text-right`;
const hdCenter = `${hdBase} text-center`;

function Predecessors() {
  return (
    <section className="flex w-[869px] shrink-0 flex-col border-l border-t border-[#a0a0a0]">
      <h2 className="flex h-[22px] shrink-0 items-center border-b border-[#a0a0a0] pb-px pl-[17px] shadow-[inset_1px_1px_0_#fff]">Predecessors</h2>
      <div className="ml-[5px] mr-1 mt-1 flex flex-1 flex-col border-b border-l border-t border-b-white border-l-[#a0a0a0] border-t-[#a0a0a0]">
        <div className="flex-1 bg-white">
          <table className="w-full table-fixed border-separate border-spacing-0">
            <colgroup>
              <col className="w-[80px]" /><col className="w-[344px]" /><col className="w-[31px]" />
              <col className="w-[29px]" /><col className="w-[62px]" /><col />
            </colgroup>
            <thead>
              <tr className="h-[18px]">
                <th className={hd}>
                  <span className="flex items-center justify-between">
                    Activity ID
                    <Svg w={8} h={8}><path d="M6.500 1.500h-6l3 6z" fill="none" stroke="#a0a0a0" /></Svg>
                  </span>
                </th>
                <th className={hd}>Activity Name</th>
                <th className={hd}>Rel</th>
                <th className={hdRight}>Lag</th>
                <th className={hd}>Status</th>
                <th className={hd}>Start</th>
              </tr>
            </thead>
          </table>
        </div>
        <div className="flex h-4 items-center pl-[17px]"><span className="h-0.5 w-[17px] bg-[#8a8a8a]" /></div>
      </div>
      <div className="flex gap-1.5 pb-1.5 pl-[5px] pt-[5px]">
        <SmallButton icon="assign" text="Assign" />
        <SmallButton icon="removeGray" text="Remove" disabled />
        <SmallButton icon="gotoGray" text="GoTo" disabled />
      </div>
    </section>
  );
}

const succ: string[][] = [
  ["PERM-100", "P/S Solid Waste Mgmt Permit", "06-Oct-26", "13-Oct-26", "16-Oct-26", "7"],
  ["PERM-110", "P/S Construction General Permit", "07-Oct-26", "26-Oct-26", "30-Oct-26", "16"],
  ["PERM-140", "P/S Dig Permit", "15-Oct-26", "19-Oct-26", "30-Oct-26", "11"],
  ["PRECON-100", "Performance and Payment Bond", "07-Oct-26", "24-Nov-26", "01-Dec-26", "36"],
  ["PRECON-110", "P/S Construction Phasing Plan", "15-Oct-26", "19-Oct-26", "30-Oct-26", "11"],
  ["PRECON-130", "P/S View Location Map", "15-Oct-26", "19-Oct-26", "30-Oct-26", "11"],
  ["PRECON-150", "P/S Preliminary Project Schedule", "15-Oct-26", "18-Oct-26", "01-Nov-26", "17"],
  ["PRECON-160", "P/S Project Scheduler Qualifications", "07-Oct-26", "26-Oct-26", "30-Oct-26", "16"],
  ["PRECON-210", "P/S Submittal Register", "22-Oct-26", "23-Nov-26", "14-Dec-26", "35"],
  ["PRECON-230", "P/S Accident Prevention Plan (APP)", "15-Oct-26", "19-Oct-26", "30-Oct-26", "11"],
  ["PRECON-250", "P/S Quality Control (CQC) Plan", "15-Oct-26", "19-Oct-26", "30-Oct-26", "11"],
];

function LinkIcon() {
  return (
    <svg width="16" height="16" viewBox="0 0 16 16" aria-hidden="true" className="shrink-0">
      <path d="M0 1.500h10.500V6M8 4l2.500 2.500L13 4" fill="none" stroke="#000" />
      <rect x="2" y="8" width="13" height="8" rx="1" fill="#2f8f1e" />
      <rect x="3" y="9" width="11" height="2" fill="#8fd67a" />
    </svg>
  );
}

function Successors() {
  return (
    <section className="flex min-w-0 flex-1 flex-col border-l border-t border-[#a0a0a0]">
      <div className="h-[22px] shrink-0 border-b border-r border-[#a0a0a0] shadow-[inset_1px_1px_0_#fff]" />
      <div className="ml-[5px] mr-[5px] mt-1 flex min-h-0 flex-1 flex-col border-b border-l border-r border-t border-b-white border-l-[#a0a0a0] border-r-white border-t-[#a0a0a0]">
        <div className="flex min-h-0 flex-1">
          <div className="h-0 min-h-full min-w-0 flex-1 overflow-hidden bg-white">
            <table className="w-full table-fixed border-separate border-spacing-0">
              <colgroup>
                <col className="w-[90px]" /><col /><col className="w-[28px]" /><col className="w-[30px]" />
                <col className="w-[80px]" /><col className="w-[69px]" /><col className="w-[71px]" />
                <col className="w-[72px]" /><col className="w-[67px]" /><col className="w-[37px]" />
                <col className="w-[49px]" /><col className="w-[31px]" />
              </colgroup>
              <thead>
                <tr className="h-[18px]">
                  <th className={hd}>Activity ID</th>
                  <th className={hd}>Activity Name</th>
                  <th className={hd}>Rel</th>
                  <th className={hdRight}>Lag</th>
                  <th className={hd}>Status</th>
                  <th className={hd}>Start</th>
                  <th className={hd}>Finish</th>
                  <th className={hd}>Late Start</th>
                  <th className={hd}>Late Finish</th>
                  <th className={hdCenter}>C?</th>
                  <th className={hdCenter}>D?</th>
                  <th className="border-b border-black bg-[#efefef] pb-px text-right font-normal">TF</th>
                </tr>
              </thead>
              <tbody>
                {succ.map(([id, name, f, ls, lf, tf], i) => (
                  <tr key={id} className={i === 0 ? "h-[18px] bg-[#0078d7] text-white" : "h-[18px]"}>
                    <td className="border-b border-r border-[#c0c0c0] pl-px">
                      <div className="flex h-[17px] items-center gap-[5px] whitespace-nowrap">
                        <LinkIcon /><span className="pb-px">{id}</span>
                      </div>
                    </td>
                    <td className={cellCls}>{name}</td>
                    <td className={cellCls}>FS</td>
                    <td className={`${cellCls} text-right`}>0</td>
                    <td className={cellCls}>Not Started</td>
                    <td className={cellCls}>01-Oct-26</td>
                    <td className={cellCls}>{f}</td>
                    <td className={cellCls}>{ls}</td>
                    <td className={cellCls}>{lf}</td>
                    <td className={cellCls}><span className="flex justify-center"><Check label={`C? ${id}`} /></span></td>
                    <td className={cellCls}><span className="flex justify-center"><Check checked label={`D? ${id}`} /></span></td>
                    <td className="border-b border-[#c0c0c0] pb-0.5 text-right">{tf}</td>
                  </tr>
                ))}
              </tbody>
            </table>
          </div>
          <div className="flex w-4 justify-center pt-[17px]"><span className="h-[17px] w-0.5 bg-[#8a8a8a]" /></div>
        </div>
        <div className="flex h-4 items-center pl-[17px]"><span className="h-0.5 w-[17px] bg-[#8a8a8a]" /></div>
      </div>
      <div className="flex gap-1.5 pb-1.5 pl-[5px] pt-[5px]">
        <SmallButton icon="assign" text="Assign" />
        <SmallButton icon="remove" text="Remove" />
        <SmallButton icon="goto" text="GoTo" />
      </div>
    </section>
  );
}

function Details() {
  const tabs = ["General", "Status", "Relationships", "Codes", "Resources"];
  return (
    <div className="flex min-h-0 flex-1 flex-col bg-[#d8d8d8] px-1 pb-1 pt-1">
      <div role="tablist" className="flex h-[22px] shrink-0">
        {tabs.map((t, i) => (
          <button
            key={t}
            role="tab"
            aria-selected={i === 2}
            className={
              i === 2
                ? "relative -mb-px h-[23px] border-r border-t border-[#696969] bg-[#efefef] px-1 pb-px"
                : "border-r border-t border-[#696969] bg-[#efefef] px-1 first:border-l"
            }
          >
            {t}
          </button>
        ))}
      </div>
      <div className="flex min-h-0 flex-1 flex-col border-b-2 border-l border-r-2 border-t border-[#696969] bg-[#efefef]">
        <div className="flex h-[31px] shrink-0 items-start pl-5 pr-[42px] pt-0.5">
          <div className="flex w-[61px] flex-col">
            <button aria-label="Previous activity" className={`flex h-3 items-center justify-center ${raised}`}>
              <svg width="8" height="4" viewBox="0 0 8 4" aria-hidden="true"><path d="M0 4h8L4 0z" /></svg>
            </button>
            <button aria-label="Next activity" className={`flex h-3 items-center justify-center ${raised}`}>
              <svg width="8" height="4" viewBox="0 0 8 4" aria-hidden="true"><path d="M0 0h8L4 4z" /></svg>
            </button>
          </div>
          <div className="flex min-w-0 flex-1 items-center pl-[104px] pt-0.5">
            <label htmlFor="activity" className="mr-[9px]">Activity</label>
            <input id="activity" defaultValue="MILE-100" className={`${field} w-[241px]`} />
            <input aria-label="Activity name" defaultValue="NTP Acknowledgement" className={`${field} ml-3.5 flex-1`} />
            <label htmlFor="project" className="ml-[130px] mr-3">Project</label>
            <input id="project" defaultValue="BL001-2" className={`${field} w-[331px]`} />
          </div>
        </div>
        <div className="flex min-h-0 flex-1 gap-2 px-1.5 pb-[5px]">
          <Predecessors />
          <Successors />
        </div>
      </div>
    </div>
  );
}

/* ---------- dialog ---------- */

const panel = "border border-b-white border-l-[#a0a0a0] border-r-white border-t-[#a0a0a0] bg-[#efefef]";
const panelHead = "flex h-[21px] items-center border-b border-r border-[#a0a0a0] pl-[5px] text-xs font-bold shadow-[inset_1px_1px_0_#fff]";

const groupRows: [string, string][] = [
  ["12 Arial", "bg-[#0000ff] text-[16px] text-[#ffff00]"],
  ["11 Arial", "bg-[#80ff80] text-[15px] text-black"],
  ["9 Arial", "bg-[#ffff00] text-[12px] text-[#0000ff]"],
  ["8 Arial", "bg-[#0000ff] text-[11px] text-white"],
  ["8 Arial", "bg-[#ff0000] text-[11px] text-[#ffffc0]"],
];

const options = [
  "Variance - BL Project Start Date", "Variance - BL Project Total Cost", "Variance - BL1 Duration",
  "Variance - BL1 Expense Cost", "Variance - BL1 Finish Date", "Variance - BL1 Labor Cost",
  "Variance - BL1 Labor Units", "Variance - BL1 Material Cost", "Variance - BL1 Nonlabor Cost",
  "Variance - BL1 Nonlabor Units", "Variance - BL1 Start Date", "Variance - BL1 Total Cost",
  "Variance At Completion", "Variance At Completion - Units", "WBS", "WBS Category", "WBS Name", "WBS Path",
  "Work Products and Documents", "WRKP",
];

function GroupByTable() {
  const td = "border-b border-r border-[#c0c0c0] px-[3px] pb-px";
  return (
    <div className="flex">
      <div className="h-[99px] w-[554px] overflow-hidden">
        <table className="w-[564px] table-fixed border-separate border-spacing-0">
          <colgroup>
            <col className="w-[140px]" /><col className="w-[44px]" /><col className="w-[64px]" />
            <col className="w-[82px]" /><col className="w-[100px]" /><col className="w-[134px]" />
          </colgroup>
          <thead>
            <tr className="h-[18px]">
              <th className={hd}>Group By</th>
              <th className={hdRight}>Indent</th>
              <th className={hdRight}>To Level</th>
              <th className={hdRight}>Group Interval</th>
              <th className={hdRight}>Page Break</th>
              <th className="border-b border-black bg-[#efefef] pb-px pr-[3px] text-right font-normal">Font &amp; Color</th>
            </tr>
          </thead>
          <tbody>
            {groupRows.map(([f, c], i) => (
              <tr key={i} className={i === 0 ? "h-[18px] bg-[#0078d7]" : "h-[18px] bg-white"}>
                <td className={td} />
                <td className={td}>{i === 0 && <span className="flex justify-center"><Check checked label="Indent" /></span>}</td>
                <td className={`${td} text-right text-[#d8ecff]`}>{i === 0 && "All"}</td>
                <td className={td} />
                <td className={td}><span className="flex justify-center"><Check label="Page Break" /></span></td>
                <td className={`${c} border-b border-[#c0c0c0] pr-[3px] text-right font-bold`}>{f}</td>
              </tr>
            ))}
          </tbody>
        </table>
      </div>
      <span className="ml-2 mt-[17px] h-[17px] w-0.5 bg-[#8a8a8a]" />
    </div>
  );
}

function Dialog() {
  const buttons: [string, React.ReactNode, string][] = [
    ["ok", "OK", ""], ["cancel", "Cancel", "mt-[5px]"], ["apply", "Apply", "mt-[15px]"],
    ["delete", "Delete", "mt-[5px]"], ["sort", <><u>S</u>ort...</>, "mt-[15px]"],
    ["play", "Default", "mt-[5px]"], ["help", "Help", "mt-[15px]"],
  ];
  return (
    <div
      role="dialog"
      aria-labelledby="dlg-title"
      className="absolute left-[613px] top-[304px] w-[694px] rounded-lg bg-[#cfcfcf] shadow-[0_0_0_1px_rgba(110,110,110,0.45),0_14px_44px_rgba(0,0,0,0.5)]"
    >
      <div className={`flex h-[30px] items-center rounded-t-lg bg-[#f3f3f3] pl-2 pr-2.5 ${SEGOE}`}>
        <Logo />
        <h2 id="dlg-title" className="ml-1.5 flex-1 text-xs text-[#222]">Group and Sort</h2>
        <button aria-label="Close dialog">
          <Svg w={12} h={12}><path d="M1 1l10 10M11 1L1 11" stroke="#222" /></Svg>
        </button>
      </div>
      <div className="flex gap-[5px] p-[5px]">
        <div className="flex flex-1 flex-col gap-[5px]">
          <section className={`${panel} h-[114px]`}>
            <h3 className={panelHead}>Display Options</h3>
            <div className="flex flex-col items-start pl-[13px] pt-[7px]">
              <CheckLabel text="Show Group Totals" />
              <div className="flex flex-col gap-2 pb-2 pl-[19px] pt-[5px]">
                <CheckLabel text="Show Grand Totals" disabled />
                <CheckLabel text="Show Summaries Only" disabled />
              </div>
              <CheckLabel text="Shrink vertical grouping bands" />
            </div>
          </section>
          <section className={`${panel} h-[139px]`}>
            <h3 className={panelHead}>Group By</h3>
            <GroupByTable />
          </section>
          <section className={`${panel} h-[160px]`}>
            <div className={panelHead} />
            <div className="pl-[11px] pt-7"><CheckLabel text="Sort bands alphabetically" /></div>
          </section>
        </div>
        <div className="flex w-[108px] flex-col">
          {buttons.map(([n, t, m]) => (
            <button key={n} className={`flex h-[25px] items-center pb-px pl-1.5 ${raised} ${m}`}>
              <Icon n={n} />
              <span className="flex-1 text-center">{t}</span>
            </button>
          ))}
        </div>
      </div>
      <div className="absolute left-[5px] top-[194px] w-[142px]">
        <div className="relative mr-0.5 h-5">
          <select aria-label="Group By" defaultValue="WBS" className="h-5 w-full appearance-none border border-[#808080] bg-white pl-0.5">
            <option>WBS</option>
          </select>
          <span className={`pointer-events-none absolute right-0.5 top-0.5 flex h-4 w-4 items-center justify-center ${raised}`}>
            <svg width="8" height="4" viewBox="0 0 8 4" aria-hidden="true"><path d="M0 0h8L4 4z" /></svg>
          </span>
        </div>
        <div className="mt-px flex border border-[#606060] bg-[#efefef]">
          <ul role="listbox" aria-label="Group By fields" className="w-[123px] overflow-hidden bg-white">
            {options.map((o) => (
              <li
                key={o}
                role="option"
                aria-selected={o === "WBS"}
                className={
                  o === "WBS"
                    ? "h-[14px] whitespace-nowrap bg-[#0078d7] pl-0.5 text-white outline-1 -outline-offset-1 outline-dotted outline-[#e08a28]"
                    : "h-[14px] whitespace-nowrap pl-0.5"
                }
              >
                {o}
              </li>
            ))}
          </ul>
          <span className="mb-[17px] ml-2 h-6 w-0.5 self-end bg-[#8a8a8a]" />
        </div>
      </div>
    </div>
  );
}

/* ---------- page ---------- */

export default function App() {
  return (
    <div className={`relative flex h-screen flex-col overflow-hidden bg-white text-[11px] leading-[14px] text-black ${ARIAL}`}>
      <TitleBar />
      <MenuBar />
      <ToolBar />
      <div className="flex min-h-0 flex-1">
        <div className="w-[27px] shrink-0 pl-px"><SideBar groups={leftGroups} /></div>
        <main className="flex min-w-0 flex-1 flex-col border-x border-[#a0a0a0]">
          <div className="flex min-h-0 flex-1 flex-col border-2 border-[#cfe6f8] bg-[#f9f9f9]">
            <div className="flex h-6 shrink-0 items-center border-b border-t border-[#dcdcdc] pl-[5px] pr-[5px]">
              <h2 className={`flex-1 text-[13px] font-bold ${SEGOE}`}>Activities</h2>
              <button aria-label="Close Activities" className="flex size-3 items-center justify-center bg-[#d9545a]">
                <Svg w={6} h={6}><path d="M.5.5l5 5M5.500.5l-5 5" stroke="#fff" strokeWidth="1.500" /></Svg>
              </button>
            </div>
            <div className="mt-[3px] flex min-h-0 flex-1 flex-col bg-[#d8d8d8] pb-1 pl-1.5 pr-[5px] pt-[5px]">
              <div className="flex min-h-0 flex-1 flex-col border border-b-white border-l-[#a0a0a0] border-r-white border-t-[#a0a0a0]">
                <div className="flex h-[17px] shrink-0 bg-[#efefef]">
                  <button className="flex w-[341px] items-center gap-1 border-b border-r border-[#a0a0a0] pl-2.5">
                    <Svg w={10} h={8}><path d="M1 1.500h8L5 6.500z" fill="none" stroke="#555" /></Svg>
                    Layout: Remaining Activities - Early/Float/$
                  </button>
                  <span className="flex flex-1 items-center border-b border-r border-[#a0a0a0] pl-[3px]">
                    Filter All: Activity Status not equal to Completed
                  </span>
                </div>
                <div className="flex h-[520px] shrink-0">
                  <ActivityTable />
                  <div className="w-1.5 shrink-0 border-x border-[#a0a0a0] bg-[#efefef]" />
                  <Gantt />
                </div>
                <div className="h-1.5 shrink-0 border-y border-[#a0a0a0] bg-[#f6f6f6]" />
                <Details />
              </div>
            </div>
          </div>
        </main>
        <div className="w-[25px] shrink-0 pl-0.5"><SideBar groups={rightGroups} /></div>
      </div>
      <div
        lang="ar"
        className="pointer-events-none absolute bottom-2 left-[836px] whitespace-nowrap font-['DejaVu_Sans',sans-serif] text-[64px] font-bold leading-[72px] text-[rgba(120,120,120,0.18)]"
      >
        خمسات
      </div>
      <Dialog />
    </div>
  );
}
